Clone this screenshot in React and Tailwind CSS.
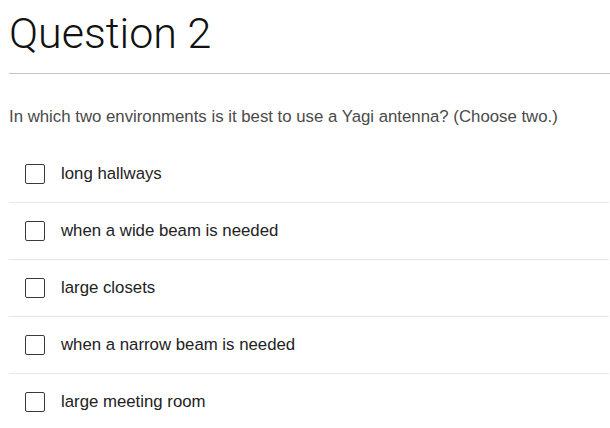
export default function App() {
  const options = [
    "long hallways",
    "when a wide beam is needed",
    "large closets",
    "when a narrow beam is needed",
    "large meeting room",
  ];
  return (
    <div className="w-[610px] h-[428px] overflow-hidden bg-white pl-[9px]" style={{ fontFamily: '"Liberation Sans", Arial, sans-serif' }}>
      <div className="pt-[7px] mb-[14px] text-[43px] leading-[52px] font-light text-[#111]" style={{ fontFamily: 'Roboto, "Liberation Sans", sans-serif' }}>
        Question 2
      </div>
      <div className="h-px bg-[#c6c6c6]" />
      <div className="mt-[31px] mb-[17px] text-[16.8px] leading-[24px] text-[#4a4a4a]">
        In which two environments is it best to use a Yagi antenna? (Choose two.)
      </div>
      <div className="mr-px">
        {options.map((o) => (
          <div key={o} className="h-[57px] border-b border-[#e6e6e6] flex items-center pl-[16px] gap-[16px]">
            <div className="w-[20px] h-[20px] border-[1.5px] border-[#3a3a3a] rounded-[2px] shrink-0" />
            <span className="text-[16.8px] leading-[24px] text-[#222]">{o}</span>
          </div>
        ))}
      </div>
    </div>
  );
}
